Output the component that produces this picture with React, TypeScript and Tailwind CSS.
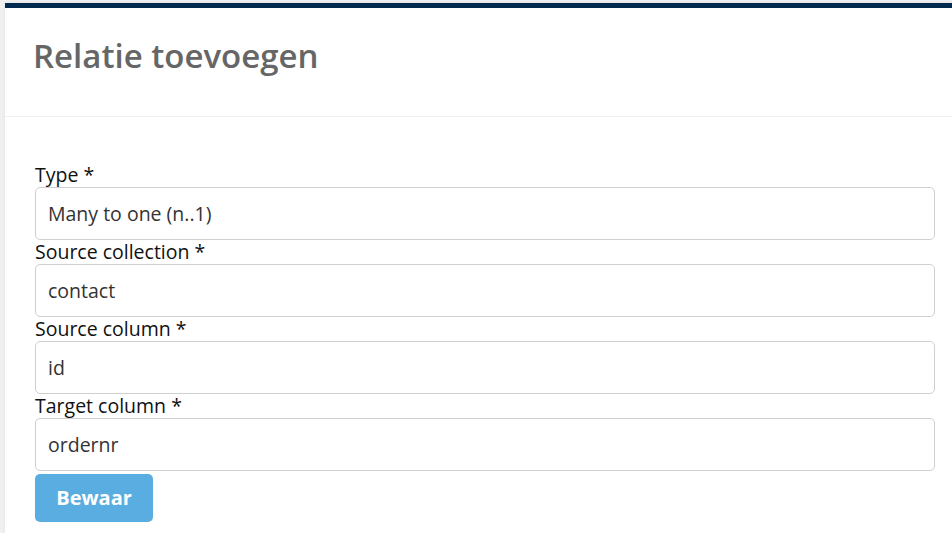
export default function App() {
  const fields = [
    { label: "Type *", value: "Many to one (n..1)" },
    { label: "Source collection *", value: "contact" },
    { label: "Source column *", value: "id" },
    { label: "Target column *", value: "ordernr" },
  ];

  return (
    <div
      className="min-h-[533px] bg-[#f0f0f0] pl-[5px] pt-[3px] overflow-hidden"
      style={{ fontFamily: '"Open Sans", "Noto Sans", sans-serif' }}
    >
      <div className="w-[960px] min-h-[530px] bg-white border-t-[5px] border-[#002b4f] shadow-[0_0_4px_rgba(0,0,0,0.06)]">
        <div className="h-[109px] border-b border-[#f0f0f0] px-[28px] pt-[26px]">
          <h1 className="text-[33px] font-semibold text-[#666666] leading-[44px]">
            Relatie toevoegen
          </h1>
        </div>
        <div className="px-[30px] pt-[46px]">
          {fields.map((f) => (
            <div key={f.label}>
              <label className="block text-[19.5px] leading-[24px] text-[#111]">{f.label}</label>
              <div className="h-[53px] w-[900px] rounded-[5px] border border-[#cfcfcf] px-[12px] flex items-center text-[19.5px] text-[#333]">
                {f.value}
              </div>
            </div>
          ))}
          <button className="mt-[3px] h-[48px] w-[118px] rounded-[5px] bg-[#5aade0] text-white text-[20px] font-bold">
            Bewaar
          </button>
        </div>
      </div>
    </div>
  );
}
